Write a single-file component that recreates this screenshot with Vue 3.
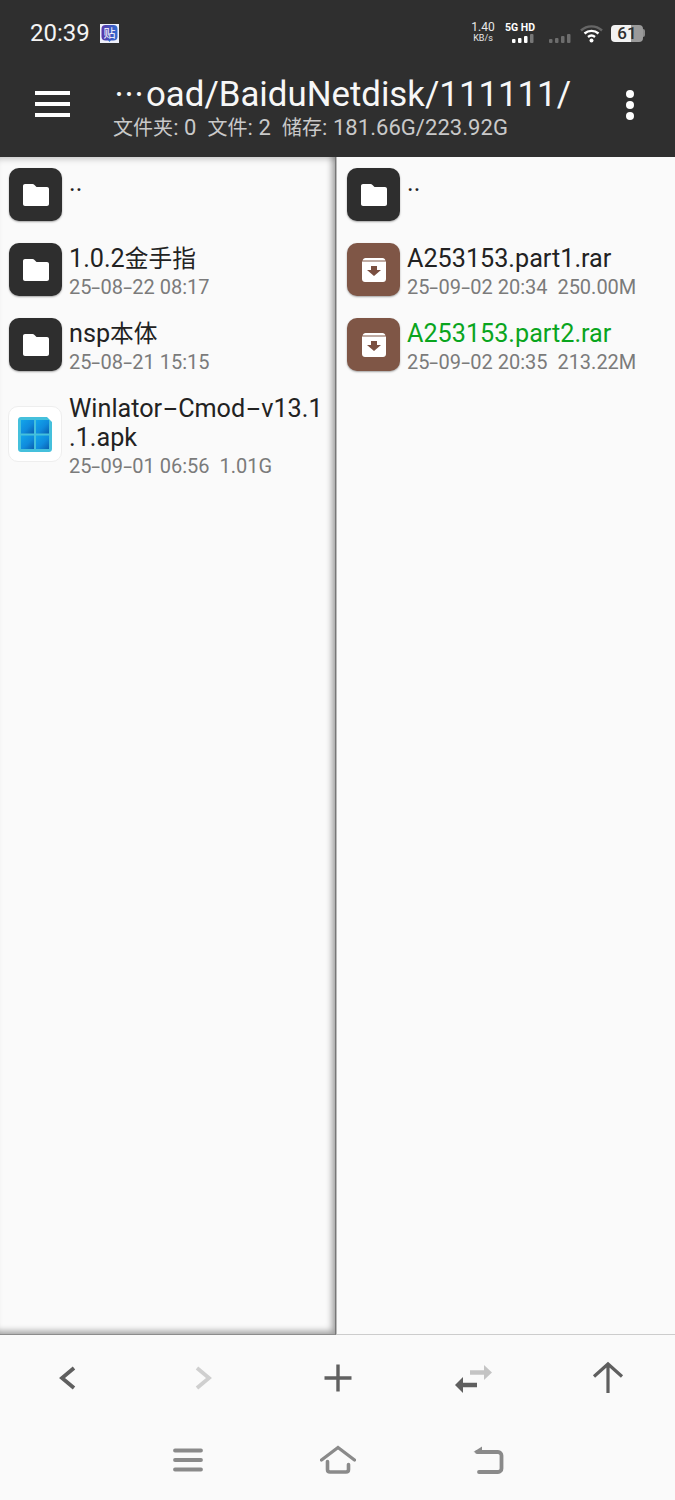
<script setup>
const left = [
  { kind: 'folder', name: '..' , up: true },
  { kind: 'folder', name: '1.0.2金手指', meta: '25-08-22 08:17' },
  { kind: 'folder', name: 'nsp本体', meta: '25-08-21 15:15' },
  { kind: 'apk', name: 'Winlator-Cmod-v13.1\n.1.apk', meta: '25-09-01 06:56\u00a0 1.01G' },
]
const right = [
  { kind: 'folder', name: '..', up: true },
  { kind: 'rar', name: 'A253153.part1.rar', meta: '25-09-02 20:34\u00a0 250.00M' },
  { kind: 'rar', name: 'A253153.part2.rar', meta: '25-09-02 20:35\u00a0 213.22M', green: true },
]
const panes = [
  { id: 'left', rows: left },
  { id: 'right', rows: right },
]

// The reference font draws CJK a little smaller and hyphens a lot longer than Roboto does.
function runs(text) {
  return text.split(/([\u4e00-\u9fff]+|-)/).filter(Boolean).map((t) => ({
    t,
    cls: t === '-' ? 'hy' : /[\u4e00-\u9fff]/.test(t) ? 'cjk' : '',
  }))
}
</script>

<template>
  <div class="screen">
    <header class="header">
      <div class="status">
        <div class="status-left">
          <span class="clock">20:39</span>
          <svg class="badge" width="19" height="19" viewBox="0 0 19 19">
            <defs>
              <linearGradient id="badge-fill" x1="0" y1="0" x2="1" y2="0">
                <stop offset="0" stop-color="#5b37a8" />
                <stop offset="1" stop-color="#2f6bd0" />
              </linearGradient>
            </defs>
            <rect width="19" height="19" fill="#eef0fa" />
            <rect x="1.500" y="1" width="16" height="15.500" rx="4" fill="url(#badge-fill)" />
            <path d="M8 16h3l-1.500 2z" fill="#2f6bd0" />
            <text x="9.500" y="13.500" text-anchor="middle" class="badge-text">贴</text>
          </svg>
        </div>
        <div class="status-right">
          <div class="speed"><span class="speed-num">1.40</span><span class="speed-unit">KB/s</span></div>
          <div class="net">
            <span class="net-label">5G HD</span>
            <svg width="23" height="10" viewBox="0 0 23 10">
              <rect x="0" y="5" width="3.500" height="4" rx="1" fill="#fff" />
              <rect x="6" y="4" width="3.500" height="5" rx="1" fill="#fff" />
              <rect x="12" y="2" width="3.500" height="7" rx="1" fill="#fff" />
              <rect x="18" y="0" width="3.500" height="9" rx="1" fill="#777" />
            </svg>
          </div>
          <svg class="sig2" width="23" height="10" viewBox="0 0 23 10">
            <rect x="0" y="5" width="3.500" height="4" rx="1" fill="#6d6d6d" />
            <rect x="6" y="4" width="3.500" height="5" rx="1" fill="#6d6d6d" />
            <rect x="12" y="2" width="3.500" height="7" rx="1" fill="#6d6d6d" />
            <rect x="18" y="0" width="3.500" height="9" rx="1" fill="#6d6d6d" />
          </svg>
          <svg class="wifi" width="23" height="19" viewBox="0 0 23 19">
            <path d="M1 6.500C7 1 16 1 22 6.500" fill="none" stroke="#666" stroke-width="2.400" />
            <path d="M4.500 9.500C8.500 6 14.500 6 18.500 9.500" fill="none" stroke="#fff" stroke-width="2.400" />
            <path d="M8 13c2-1.600 5-1.600 7 0" fill="none" stroke="#fff" stroke-width="2.400" />
            <circle cx="11.500" cy="16.500" r="2" fill="#fff" />
          </svg>
          <div class="battery">
            <div class="battery-body"><span class="battery-num">61</span></div>
            <div class="battery-tip"></div>
          </div>
        </div>
      </div>
      <div class="toolbar">
        <button class="hamburger" aria-label="menu"><span></span><span></span><span></span></button>
        <div class="titles">
          <div class="path"><span class="ell">…</span>oad/BaiduNetdisk/111111/</div>
          <div class="stats"><span class="cjk">文件夹</span>: 0&nbsp; <span class="cjk">文件</span>: 2&nbsp; <span class="cjk">储存</span>: 181.66G/223.92G</div>
        </div>
        <div class="kebab"><span></span><span></span><span></span></div>
      </div>
    </header>

    <main class="panes">
      <section v-for="pane in panes" :key="pane.id" class="pane" :class="'pane-' + pane.id">
        <div v-for="row in pane.rows" :key="row.name" class="row">
          <div class="icon" :class="'icon-' + row.kind">
            <svg v-if="row.kind === 'folder'" width="26" height="22" viewBox="0 0 26 22">
              <path d="M2 0h7.500c.8 0 1.400.3 2 .9L13.500 3H24c1.100 0 2 .9 2 2v15c0 1.100-.9 2-2 2H2c-1.100 0-2-.9-2-2V2C0 .9.900 0 2 0z" fill="#fff" />
            </svg>
            <svg v-else-if="row.kind === 'rar'" width="24" height="24" viewBox="0 0 24 24">
              <path d="M3.500 0h17c1.500 0 2.500 1 3 2.500H.5C1 1 2 0 3.500 0z" fill="#fff" />
              <path d="M0 3.600h24V21c0 1.700-1.300 3-3 3H3c-1.700 0-3-1.300-3-3z" fill="#fff" />
              <path d="M9 8h6v4h4l-7 6-7-6h4z" fill="#7a4f40" />
            </svg>
            <svg v-else width="34" height="35" viewBox="0 0 34 35">
              <defs>
                <linearGradient id="pane-fill" x1="0" y1="0" x2="1" y2="1">
                  <stop offset="0" stop-color="#12a5ea" />
                  <stop offset="0.55" stop-color="#0f8bdd" />
                  <stop offset="1" stop-color="#0a5fb0" />
                </linearGradient>
              </defs>
              <path d="M3 0h26l5 5v27c0 1.700-1.300 3-3 3H3c-1.700 0-3-1.300-3-3V3C0 1.300 1.300 0 3 0z" fill="#45c0dc" />
              <rect x="3" y="3" width="13" height="13.500" fill="url(#pane-fill)" />
              <rect x="18" y="3" width="13" height="13.500" fill="url(#pane-fill)" />
              <rect x="3" y="18.500" width="13" height="13.500" fill="url(#pane-fill)" />
              <rect x="18" y="18.500" width="13" height="13.500" fill="url(#pane-fill)" />
            </svg>
          </div>
          <div class="info">
            <div class="name" :class="{ green: row.green, up: row.up }">
              <div v-for="(line, n) in row.name.split('\n')" :key="n" class="name-line"><span v-for="(r, i) in runs(line)" :key="i" :class="r.cls">{{ r.t }}</span></div>
            </div>
            <div v-if="row.meta" class="meta"><span v-for="(r, i) in runs(row.meta)" :key="i" :class="r.cls">{{ r.t }}</span></div>
          </div>
        </div>
      </section>
    </main>

    <footer class="footer">
      <div class="actions">
        <div class="act">
          <svg width="40" height="40" viewBox="0 0 40 40"><path d="M26 10 14 20l12 10" fill="none" stroke="#5f5f5f" stroke-width="3.800" /></svg>
        </div>
        <div class="act">
          <svg width="40" height="40" viewBox="0 0 40 40"><path d="M14 10l12 10-12 10" fill="none" stroke="#cfcfcf" stroke-width="3.800" /></svg>
        </div>
        <div class="act">
          <svg width="40" height="40" viewBox="0 0 40 40"><path d="M20 6.500v27M6.500 20h27" fill="none" stroke="#606060" stroke-width="3.400" /></svg>
        </div>
        <div class="act">
          <svg width="40" height="40" viewBox="0 0 40 40">
            <path d="M17 14.500h15" fill="none" stroke="#c4c4c4" stroke-width="4.500" /><path d="M31 7l8 7.500-8 7.500z" fill="#c4c4c4" />
            <path d="M24 27h-15" fill="none" stroke="#5f5f5f" stroke-width="4.500" /><path d="M10 19l-8 8 8 8z" fill="#5f5f5f" />
          </svg>
        </div>
        <div class="act">
          <svg width="40" height="40" viewBox="0 0 40 40"><path d="M20 35V6M6 18.500 20 6l14 12.500" fill="none" stroke="#5f5f5f" stroke-width="3.200" /></svg>
        </div>
      </div>
      <nav class="nav">
        <div class="nav-btn">
          <svg width="36" height="30" viewBox="0 0 36 30"><path d="M5 5.500h26M5 15h26M5 24.500h26" fill="none" stroke="#8a8a8a" stroke-width="3.800" stroke-linecap="round" /></svg>
        </div>
        <div class="nav-btn">
          <svg width="36" height="30" viewBox="0 0 36 30"><path d="M1.500 15 18 2.500 34.500 15" fill="none" stroke="#8a8a8a" stroke-width="3.300" stroke-linecap="round" /><path d="M7.500 16.500v8c0 1.500 1 2.500 2.500 2.500h16c1.500 0 2.500-1 2.500-2.500v-5" fill="none" stroke="#8a8a8a" stroke-width="3.600" stroke-linecap="round" /></svg>
        </div>
        <div class="nav-btn">
          <svg width="36" height="30" viewBox="0 0 36 30"><path d="M7 7h21c2 0 3.500 1.500 3.500 3.500v13c0 2-1.500 3.500-3.500 3.500H9" fill="none" stroke="#8a8a8a" stroke-width="3.800" stroke-linecap="round" /><path d="M12 1.500 3.500 7 12 9z" fill="#8a8a8a" /></svg>
        </div>
      </nav>
    </footer>
  </div>
</template>

<style scoped>
.screen {
  width: 675px;
  height: 1500px;
  display: flex;
  flex-direction: column;
  background: #fafafa;
  font-family: Roboto, "Noto Sans CJK SC", sans-serif;
  overflow: hidden;
}
.header {
  height: 157px;
  background: #2f2f2f;
  color: #fff;
  flex: none;
}
.status {
  height: 66px;
  padding: 0 30px;
  display: flex;
  align-items: center;
  justify-content: space-between;
}
.status-left {
  display: flex;
  align-items: center;
  gap: 10px;
}
.clock {
  font-size: 24px;
  color: #f4f4f4;
}
.badge-text {
  font-family: "Noto Sans CJK SC", sans-serif;
  font-size: 12px;
  fill: #fff;
}
.status-right {
  display: flex;
  align-items: center;
}
.speed {
  display: flex;
  flex-direction: column;
  align-items: center;
  line-height: 11px;
  color: #e8e8e8;
  width: 24px;
  margin-right: 8px;
}
.speed-num { font-size: 12px; }
.speed-unit { font-size: 9px; }
.net {
  display: flex;
  flex-direction: column;
  align-items: flex-end;
  width: 32px;
  margin-right: 14px;
}
.net-label {
  font-size: 10.500px;
  font-weight: 700;
  line-height: 12px;
  white-space: nowrap;
}
.sig2 { margin-top: 12px; margin-right: 8px; }
.wifi { margin-right: 8px; }
.battery {
  display: flex;
  align-items: center;
}
.battery-body {
  width: 32px;
  height: 17px;
  border-radius: 4px;
  background: linear-gradient(90deg, #f2f2f2 0 62%, #9a9a9a 62% 100%);
  display: flex;
  align-items: center;
  justify-content: center;
}
.battery-num {
  font-size: 17px;
  font-weight: 500;
  color: #2f2f2f;
}
.battery-tip {
  width: 2px;
  height: 8px;
  background: #8a8a8a;
  border-radius: 0 2px 2px 0;
}
.toolbar {
  height: 91px;
  display: flex;
}
.hamburger {
  width: 35px;
  height: 26px;
  margin: 25px 0 0 35px;
  padding: 0;
  background: none;
  border: 0;
  display: flex;
  flex-direction: column;
  justify-content: space-between;
  flex: none;
}
.hamburger span {
  height: 4px;
  background: #fff;
}
.titles {
  margin-left: 44px;
  flex: 1;
  min-width: 0;
}
.path {
  font-size: 34.800px;
  line-height: 40px;
  margin-top: 8px;
  color: #f7f7f7;
  white-space: nowrap;
}
.ell {
  display: inline-block;
  font-family: "Noto Sans CJK TC", sans-serif;
  font-size: 30px;
  line-height: 30px;
  margin-right: 2px;
  transform: translateY(-1px);
}
.stats {
  font-size: 22px;
  line-height: 24px;
  margin-top: 2px;
  margin-left: -1px;
  color: #c9c9c9;
  white-space: nowrap;
  letter-spacing: 0.05px;
}
.stats .cjk {
  font-size: 20px;
  line-height: 1;
}
.kebab {
  width: 8px;
  margin: 24px 41px 0 0;
  display: flex;
  flex-direction: column;
  gap: 3px;
  flex: none;
}
.kebab span {
  width: 8px;
  height: 8px;
  border-radius: 50%;
  background: #fff;
}
.panes {
  flex: 1;
  display: flex;
  min-height: 0;
}
.pane {
  padding-top: 11px;
  box-sizing: border-box;
}
.pane-left {
  width: 336px;
  flex: none;
  padding-right: 10px;
  box-shadow: inset -5px -5px 6px -2px rgba(0, 0, 0, 0.35), inset 0 6px 6px -4px rgba(0, 0, 0, 0.22);
  border-bottom: 1px solid #8c8c8c;
  border-right: 1px solid #777;
}
.pane-right {
  flex: 1;
  padding-left: 1px;
  padding-right: 10px;
  border-left: 1px solid #bbb;
  border-bottom: 1px solid #ccc;
}
.row {
  display: flex;
  gap: 7px;
  margin-bottom: 22px;
}
.icon {
  width: 53px;
  height: 53px;
  margin-left: 9px;
  border-radius: 10px;
  display: flex;
  align-items: center;
  justify-content: center;
  flex: none;
  box-shadow: 0 1px 2px rgba(0, 0, 0, 0.35);
}
.icon-folder { background: #2e2e2e; }
.icon-rar { background: #7f5646; }
.icon-apk {
  background: #fff;
  align-self: center;
  margin-left: 8px;
  width: 54px;
  height: 56px;
  box-sizing: border-box;
  border: 1px solid #eeeeee;
  box-shadow: none;
}
.info {
  min-width: 0;
  flex: 1;
}
.name {
  font-size: 25.200px;
  line-height: 29px;
  padding-top: 1px;
  color: #222;
  white-space: nowrap;
}
.name.up { padding-top: 0; }
.name.green { color: #0aa51e; }
.name .cjk {
  font-size: 23.700px;
  line-height: 1;
}
.name .hy {
  display: inline-block;
  line-height: 1;
  transform: scaleX(1.9);
  margin: 0 0.18em;
}
.meta {
  font-size: 20px;
  line-height: 23px;
  margin-top: 3px;
  margin-bottom: -3px;
  color: #7b7b7b;
  white-space: nowrap;
}
.meta .hy {
  display: inline-block;
  line-height: 1;
  transform: scaleX(1.6);
  margin: 0 0.09em;
}
.footer {
  height: 165px;
  flex: none;
  background: #fafafa;
  padding-top: 21px;
  box-sizing: border-box;
}
.actions {
  display: flex;
  height: 44px;
}
.act {
  width: 135px;
  height: 44px;
  display: flex;
  align-items: center;
  justify-content: center;
}
.nav {
  display: flex;
  justify-content: center;
  margin-top: 45px;
}
.nav-btn {
  width: 150px;
  height: 30px;
  display: flex;
  align-items: center;
  justify-content: center;
}
</style>

<style>
html, body { background: #fafafa; }
</style>
